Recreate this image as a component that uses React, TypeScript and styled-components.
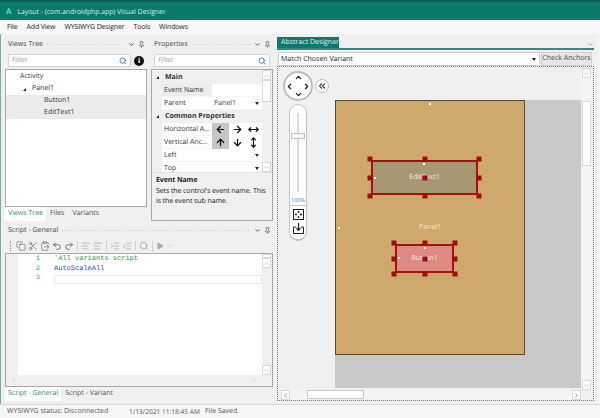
import React from "react";
import styled, { createGlobalStyle } from "styled-components";
import { Search, Pin, ChevronDown, Copy, Scissors, ClipboardPaste, Undo2, Redo2, Play, ChevronUp, ChevronLeft, ChevronRight, ChevronsLeft, ArrowLeft, ArrowRight, ArrowUp, ArrowDown, MoveHorizontal, MoveVertical, Indent, Outdent, AlignLeft } from "lucide-react";

const Global = createGlobalStyle`
  html, body { margin: 0; padding: 0; width: 600px; height: 418px; overflow: hidden; background: #f1f1f1; }
  * { box-sizing: border-box; }
  body { font-family: "Open Sans", "Noto Sans", sans-serif; font-size: 7px; color: #333; text-rendering: geometricPrecision; }
`;
const Win = styled.div`
  width: 600px; height: 418px; display: flex; flex-direction: column; background: #f0f0f0; overflow: hidden;
`;
const TitleBar = styled.div`
  height: 20px; background: #0a7a6c; border-top: 2px solid #0a5f54; color: #d8eeea; display: flex; align-items: center; padding-left: 6px; gap: 6px; font-size: 6.8px; flex: none;
`;
const TitleLogo = styled.span` color: #58d8c0; font-weight: 700; font-size: 8px; `;
const MenuBar = styled.div`
  height: 14px; background: #f7f7f7; display: flex; align-items: center; padding-left: 7px; gap: 9px; color: #222; flex: none; letter-spacing: -0.15px;
`;
const Body = styled.div`
  flex: 1; min-height: 0; display: flex; padding: 4px 3px 3px 5px; gap: 4px; border-left: 1px solid #6fb0a6; border-right: 3px solid #f4f4f4;
`;
const LeftCol = styled.div` width: 268px; display: flex; flex-direction: column; gap: 3px; margin-left: -1px; flex: none; `;
const TopRow = styled.div` display: flex; gap: 4px; height: 183px; flex: none; `;
const Pane = styled.div<{ $w?: number }>`
  display: flex; flex-direction: column; ${(p) => (p.$w ? `width:${p.$w}px;flex:none;` : "flex:1;min-width:0;")} min-height: 0;
`;
const PaneHead = styled.div`
  height: 13px; display: flex; align-items: center; gap: 3px; padding: 0 2px 0 3px; color: #444; flex: none; background: #f0f0f0;
`;
const Dots = styled.div`
  flex: 1; height: 4px; background-image: radial-gradient(#c6c6c6 0.7px, transparent 0.8px); background-size: 3px 3px;
`;
const FilterRow = styled.div` display: flex; align-items: center; gap: 3px; padding: 3px 3px 2px 3px; flex: none; `;
const FilterBox = styled.div`
  flex: 1; height: 13px; background: #fff; border: 1px solid #d4d4d4; display: flex; align-items: center; justify-content: space-between; padding: 0 3px; color: #9a9a9a; font-style: italic;
`;
const InfoBadge = styled.div`
  width: 10px; height: 10px; border-radius: 50%; background: #111; color: #fff; font: 700 8px/10px "Liberation Serif", serif; text-align: center; flex: none;
`;
const Tree = styled.div`
  flex: 1; background: #fff; border: 1px solid #a8a8a8; padding-top: 1px; min-height: 0;
`;
const TreeRow = styled.div<{ $ind: number; $sel?: boolean }>`
  height: 12px; line-height: 12px; padding-left: ${(p) => p.$ind}px; background: ${(p) => (p.$sel ? "#ebebeb" : "transparent")}; color: #333; display: flex; align-items: center; gap: 6px;
`;
const Tri = styled.span`
  width: 0; height: 0; border-left: 3px solid transparent; border-bottom: 3px solid #222; display: inline-block; flex: none;
`;
const Tabs = styled.div` height: 14px; display: flex; flex: none; align-items: stretch; `;
const Tab = styled.div<{ $on?: boolean }>`
  padding: 0 ${(p) => (p.$on ? "3px" : "4px")}; line-height: 13px; background: ${(p) => (p.$on ? "#fff" : "transparent")}; color: ${(p) => (p.$on ? "#1f8a7c" : "#555")};
`;
const PropBox = styled.div` flex: 1; border: 1px solid #a8a8a8; display: flex; flex-direction: column; min-height: 0; `;
const PropGridWrap = styled.div` height: 102px; display: flex; background: #fff; flex: none; `;
const PropGrid = styled.div` flex: 1; min-width: 0; overflow: hidden; padding-top: 1px; `;
const SectionRow = styled.div`
  height: 13px; display: flex; align-items: center; gap: 6px; padding-left: 4px; font-weight: 700; color: #333; background: #f0f0f0;
`;
const PropRow = styled.div` height: 13px; display: flex; background: #f0f0f0; padding-left: 10px; `;
const PropLabel = styled.div<{ $hi?: boolean }>`
  width: 50px; background: ${(p) => (p.$hi ? "#ececec" : "#fff")}; padding-left: 2px; line-height: 13px; white-space: nowrap; flex: none; border-bottom: 1px solid #f4f4f4;
`;
const PropValue = styled.div`
  flex: 1; background: #fff; line-height: 13px; padding: 0 3px 0 2px; display: flex; justify-content: space-between; align-items: center; color: #444; border-bottom: 1px solid #f4f4f4;
`;
const ArrowCell = styled.div<{ $on?: boolean }>`
  flex: 1; background: ${(p) => (p.$on ? "#c6c6c6" : "#fff")}; display: flex; align-items: center; justify-content: center; color: #111;
`;
const Caret = styled.span`
  width: 0; height: 0; border-left: 2.5px solid transparent; border-right: 2.5px solid transparent; border-top: 3px solid #222;
`;
const VScroll = styled.div` width: 10px; background: #f0f0f0; display: flex; flex-direction: column; flex: none; `;
const ScrollBtn = styled.div`
  width: 9px; height: 10px; background: #fff; border: 1px solid #d8d8d8; display: flex; align-items: center; justify-content: center; color: #aaa; flex: none;
`;
const Thumb = styled.div<{ $h: number }>` height: ${(p) => p.$h}px; width: 9px; background: #fff; border: 1px solid #d8d8d8; flex: none; `;
const Spacer = styled.div<{ $h?: number }>` ${(p) => (p.$h ? `height:${p.$h}px;flex:none;` : "flex:1;")} `;
const Desc = styled.div` flex: 1; background: #f0f0f0; padding: 3px 0 3px 4px; line-height: 9.5px; color: #222; border-top: 1px solid #e2e2e2; letter-spacing: -0.1px; `;
const DescTitle = styled.div` font-weight: 700; margin-bottom: 1px; line-height: 10px; `;
const ScriptPane = styled(Pane)` flex: 1; `;
const Toolbar = styled.div` height: 15px; display: flex; align-items: center; gap: 2px; padding-left: 5px; color: #555; flex: none; margin-top: 1px; `;
const Sep = styled.div` width: 1px; height: 10px; background: #cfcfcf; margin: 0 1px; `;
const Grip = styled.div` width: 1px; height: 10px; border-left: 1px dotted #888; margin-right: 3px; `;
const Editor = styled.div` flex: 1; border: 1px solid #a8a8a8; background: #f0f0f0; display: flex; flex-direction: column; min-height: 0; `;
const EditorMain = styled.div` flex: 1; display: flex; min-height: 0; `;
const Gutter = styled.div` width: 12px; background: #f0f0f0; flex: none; `;
const Code = styled.div` flex: 1; background: #fff; font-family: "Liberation Mono", monospace; font-size: 7px; padding-top: 1px; `;
const CodeRow = styled.div` height: 9.6px; line-height: 9.6px; display: flex; `;
const LineNo = styled.div` width: 36px; text-align: right; padding-right: 14px; color: #2a9ab0; flex: none; `;
const CodeText = styled.div<{ $c?: string; $cur?: boolean }>`
  flex: 1; color: ${(p) => p.$c || "#000"}; ${(p) => (p.$cur ? "border: 1px solid #e8e8e8; height: 9px; margin: 1px 0 0 0;" : "")}
`;
const HBar = styled.div` height: 11px; display: flex; justify-content: space-between; padding: 0 14px 0 4px; align-items: center; flex: none; `;
const Right = styled.div` flex: 1; display: flex; flex-direction: column; min-width: 0; `;
const TabStrip = styled.div` height: 13px; border-bottom: 2px solid #2c8e80; display: flex; justify-content: space-between; align-items: flex-end; flex: none; margin-top: -1px; `;
const ActiveTab = styled.div` height: 11px; padding: 0 4px; line-height: 11px; background: #0a7a6c; color: #e4f3f0; width: 62px; white-space: nowrap; `;
const ComboRow = styled.div` height: 17px; display: flex; gap: 1px; padding: 2px 2px 1px 1px; flex: none; `;
const Combo = styled.div` flex: 1; background: #fff; border: 1px solid #d0d0d0; display: flex; justify-content: space-between; align-items: center; padding: 0 3px 0 2px; color: #222; `;
const CheckBtn = styled.div` width: 51px; background: #e6e6e6; border: 1px solid #d0d0d0; text-align: center; line-height: 12px; color: #444; white-space: nowrap; `;
const Frame = styled.div` flex: 1; position: relative; border: 1px dotted #777; background: #f0f0f0; overflow: hidden; margin-top: -1px; `;
/* free canvas: the designer's content, placed by coordinates */
const Work = styled.div` position: absolute; left: 57px; top: 33px; width: 248px; height: 288px; background: #c9c9c9; `;
const Sand = styled.div`
  position: absolute; left: 0; top: 0; width: 190px; height: 255px; background: #cea86c; border: 1px solid #5c4a2c;
`;
const FrameV = styled.div` position: absolute; right: 1px; top: 1px; bottom: 10px; width: 11px; display: flex; flex-direction: column; background: #f4f4f4; align-items: center; `;
const FrameH = styled.div` position: absolute; left: 3px; right: 12px; bottom: 0; height: 10px; display: flex; background: #f4f4f4; `;
const HThumb = styled.div` width: 57px; height: 9px; background: #fff; border: 1px solid #c8c8c8; margin-left: 17px; `;
const DPad = styled.div`
  position: absolute; left: 5px; top: 4px; width: 30px; height: 30px; border-radius: 50%; background: #fff; border: 2px solid #bdbdbd; color: #111;
`;
const Chev = styled.span<{ $x: number; $y: number }>` position: absolute; left: ${(p) => p.$x}px; top: ${(p) => p.$y}px; display: flex; `;
const BackBtn = styled.div`
  position: absolute; left: 37px; top: 12px; width: 14px; height: 14px; border-radius: 50%; background: #fff; border: 1px solid #bdbdbd; display: flex; align-items: center; justify-content: center; color: #111;
`;
const SliderCap = styled.div`
  position: absolute; left: 11px; top: 37px; width: 18px; height: 137px; border-radius: 9px; background: #fff; border: 1px solid #c4c4c4; border-bottom-width: 2px; display: flex; flex-direction: column; align-items: center;
`;
const Track = styled.div` width: 2px; height: 79px; margin-top: 8px; background: #dcdcdc; position: relative; flex: none; `;
const SliderThumb = styled.div` position: absolute; left: -6px; top: 20px; width: 14px; height: 6px; background: #f4f4f4; border: 1px solid #c4c4c4; `;
const Pct = styled.div` font-size: 5.5px; color: #3a7fb0; margin-top: 4px; line-height: 8px; padding-bottom: 1px; border-bottom: 1px solid #ccc; width: 100%; text-align: center; `;
const CapIcon = styled.svg` margin-top: 3px; flex: none; `;
const Control = styled.div<{ $x: number; $y: number; $w: number; $h: number; $bg: string }>`
  position: absolute; left: ${(p) => p.$x}px; top: ${(p) => p.$y}px; width: ${(p) => p.$w}px; height: ${(p) => p.$h}px; background: ${(p) => p.$bg}; border: 2px solid #a80f10; display: flex; align-items: center; justify-content: center; color: #eee;
`;
const Handle = styled.div<{ $l: string; $t: string }>`
  position: absolute; width: 5px; height: 5px; background: #a00c0c; left: ${(p) => p.$l}; top: ${(p) => p.$t}; transform: translate(-50%, -50%);
`;
const Dot = styled.div<{ $x: number; $y: number }>`
  position: absolute; left: ${(p) => p.$x}px; top: ${(p) => p.$y}px; width: 2px; height: 2px; background: #fff;
`;
const PanelLabel = styled.div` position: absolute; left: 83px; top: 122px; color: #f3ead8; `;
const Status = styled.div`
  height: 14px; flex: none; background: #f6f6f6; border-top: 1px solid #d8d8d8; display: flex; align-items: center; padding-left: 7px; color: #555; white-space: nowrap;
`;
const StatusA = styled.span` width: 122px; `;
const StatusB = styled.span` width: 76px; font-size: 6.6px; `;

const H = ["-3px", "50%", "calc(100% + 3px)"];
const Handles = () => (
  <>
    {H.flatMap((t) => H.map((l) => <Handle key={l + t} $l={l} $t={t} />))}
  </>
);
const Head = ({ t }: { t: string }) => (
  <PaneHead>
    {t}
    <Dots />
    <ChevronDown size={7} strokeWidth={3} />
    <Pin size={7} />
  </PaneHead>
);
const Filter = () => (
  <FilterBox>
    Filter
    <Search size={8} color="#2c6fb0" strokeWidth={2.5} />
  </FilterBox>
);
const a = { size: 11, strokeWidth: 2.6 };
const t = { size: 10, strokeWidth: 1.4 };

export default function App() {
  return (
    <Win>
      <Global />
      <TitleBar>
        <TitleLogo>A</TitleLogo>
        Layout - (com.androidphp.app) Visual Designer
      </TitleBar>
      <MenuBar>
        <span>File</span>
        <span>Add View</span>
        <span>WYSIWYG Designer</span>
        <span>Tools</span>
        <span>Windows</span>
      </MenuBar>
      <Body>
        <LeftCol>
          <TopRow>
            <Pane $w={142}>
              <Head t="Views Tree" />
              <FilterRow>
                <Filter />
                <InfoBadge>i</InfoBadge>
              </FilterRow>
              <Tree>
                <TreeRow $ind={14}>Activity</TreeRow>
                <TreeRow $ind={17}>
                  <Tri />
                  Panel1
                </TreeRow>
                <TreeRow $ind={38} $sel>Button1</TreeRow>
                <TreeRow $ind={38} $sel>EditText1</TreeRow>
              </Tree>
              <Tabs>
                <Tab $on>Views Tree</Tab>
                <Tab>Files</Tab>
                <Tab>Variants</Tab>
              </Tabs>
            </Pane>
            <Pane>
              <Head t="Properties" />
              <FilterRow>
                <Filter />
              </FilterRow>
              <PropBox>
                <PropGridWrap>
                  <PropGrid>
                    <SectionRow><Tri />Main</SectionRow>
                    <PropRow><PropLabel $hi>Event Name</PropLabel><PropValue /></PropRow>
                    <PropRow><PropLabel>Parent</PropLabel><PropValue>Panel1<Caret /></PropValue></PropRow>
                    <SectionRow><Tri />Common Properties</SectionRow>
                    <PropRow>
                      <PropLabel>Horizontal A...</PropLabel>
                      <ArrowCell $on><ArrowLeft {...a} /></ArrowCell>
                      <ArrowCell><ArrowRight {...a} /></ArrowCell>
                      <ArrowCell><MoveHorizontal {...a} /></ArrowCell>
                    </PropRow>
                    <PropRow>
                      <PropLabel>Vertical Anc...</PropLabel>
                      <ArrowCell $on><ArrowUp {...a} /></ArrowCell>
                      <ArrowCell><ArrowDown {...a} /></ArrowCell>
                      <ArrowCell><MoveVertical {...a} /></ArrowCell>
                    </PropRow>
                    <PropRow><PropLabel>Left</PropLabel><PropValue><span /><Caret /></PropValue></PropRow>
                    <PropRow><PropLabel>Top</PropLabel><PropValue><span /><Caret /></PropValue></PropRow>
                  </PropGrid>
                  <VScroll>
                    <ScrollBtn><ChevronUp size={7} /></ScrollBtn>
                    <Thumb $h={22} />
                    <Spacer />
                    <ScrollBtn><ChevronDown size={7} /></ScrollBtn>
                  </VScroll>
                </PropGridWrap>
                <Desc>
                  <DescTitle>Event Name</DescTitle>
                  Sets the control's event name. This is the event sub name.
                </Desc>
              </PropBox>
            </Pane>
          </TopRow>
          <ScriptPane>
            <Head t="Script - General" />
            <Toolbar>
              <Grip />
              <Copy {...t} />
              <Scissors {...t} />
              <ClipboardPaste {...t} />
              <Undo2 {...t} color="#222" />
              <Redo2 {...t} color="#222" />
              <Sep />
              <AlignLeft {...t} color="#999" />
              <AlignLeft {...t} color="#999" />
              <Sep />
              <Indent {...t} color="#999" />
              <Outdent {...t} color="#999" />
              <Sep />
              <Search {...t} color="#888" />
              <Sep />
              <Play {...t} size={8} color="#aaa" fill="#aaa" />
              <ChevronDown size={6} color="#aaa" />
            </Toolbar>
            <Editor>
              <EditorMain>
                <Gutter />
                <Code>
                  <CodeRow><LineNo>1</LineNo><CodeText $c="#1f9a3c">'All variants script</CodeText></CodeRow>
                  <CodeRow><LineNo>2</LineNo><CodeText $c="#2a3fe0">AutoScaleAll</CodeText></CodeRow>
                  <CodeRow><LineNo>3</LineNo><CodeText $cur /></CodeRow>
                </Code>
                <VScroll>
                  <Thumb $h={4} />
                  <ScrollBtn><ChevronUp size={7} /></ScrollBtn>
                  <Spacer />
                  <ScrollBtn><ChevronDown size={7} /></ScrollBtn>
                </VScroll>
              </EditorMain>
              <HBar>
                <ChevronLeft size={7} color="#bbb" />
                <ChevronRight size={7} color="#bbb" />
              </HBar>
            </Editor>
            <Tabs>
              <Tab $on>Script - General</Tab>
              <Tab>Script - Variant</Tab>
            </Tabs>
          </ScriptPane>
        </LeftCol>
        <Right>
          <TabStrip>
            <ActiveTab>Abstract Designer</ActiveTab>
            <ChevronDown size={7} color="#999" strokeWidth={3} />
          </TabStrip>
          <ComboRow>
            <Combo>Match Chosen Variant<Caret /></Combo>
            <CheckBtn>Check Anchors</CheckBtn>
          </ComboRow>
          <Frame>
            <Work>
              <Sand>
                <Dot $x={93} $y={2} />
                <Dot $x={2} $y={126} />
                <PanelLabel>Panel1</PanelLabel>
                <Control $x={35} $y={59} $w={107} $h={35} $bg="#a89773">
                  EditText1
                  <Handles />
                  <Dot $x={50} $y={1} />
                  <Dot $x={1} $y={15} />
                </Control>
                <Control $x={59} $y={143} $w={59} $h={29} $bg="#de8a82">
                  Button1
                  <Handles />
                  <Dot $x={27} $y={1} />
                  <Dot $x={1} $y={11} />
                </Control>
              </Sand>
            </Work>
            <FrameV>
              <ScrollBtn><ChevronUp size={7} /></ScrollBtn>
              <Spacer $h={23} />
              <Thumb $h={65} />
              <Spacer />
              <ScrollBtn><ChevronDown size={7} /></ScrollBtn>
            </FrameV>
            <FrameH>
              <ScrollBtn><ChevronLeft size={7} color="#555" /></ScrollBtn>
              <HThumb />
              <Spacer />
              <ScrollBtn><ChevronRight size={7} color="#555" /></ScrollBtn>
            </FrameH>
            <DPad>
              <Chev $x={9} $y={0}><ChevronUp size={9} strokeWidth={3} /></Chev>
              <Chev $x={9} $y={17}><ChevronDown size={9} strokeWidth={3} /></Chev>
              <Chev $x={0} $y={9}><ChevronLeft size={9} strokeWidth={3} /></Chev>
              <Chev $x={17} $y={9}><ChevronRight size={9} strokeWidth={3} /></Chev>
            </DPad>
            <BackBtn><ChevronsLeft size={10} strokeWidth={2.5} /></BackBtn>
            <SliderCap>
              <Track><SliderThumb /></Track>
              <Pct>100%</Pct>
              <CapIcon width="11" height="11" viewBox="0 0 11 11">
                <rect x="0.5" y="0.5" width="10" height="10" fill="#fff" stroke="#222" />
                <path d="M5.5 2v2M5.5 7v2M2 5.5h2M7 5.5h2" stroke="#222" strokeWidth="1.4" />
              </CapIcon>
              <CapIcon width="11" height="11" viewBox="0 0 11 11">
                <path d="M3 4H0.5v6.5h10V4H8" fill="none" stroke="#222" />
                <path d="M5.5 0v7M3.5 5l2 2.4 2-2.4" fill="none" stroke="#222" strokeWidth="1.2" />
              </CapIcon>
            </SliderCap>
          </Frame>
        </Right>
      </Body>
      <Status>
        <StatusA>WYSIWYG status: Disconnected</StatusA>
        <StatusB>1/13/2021 11:18:45 AM</StatusB>
        <span>File Saved.</span>
      </Status>
    </Win>
  );
}
